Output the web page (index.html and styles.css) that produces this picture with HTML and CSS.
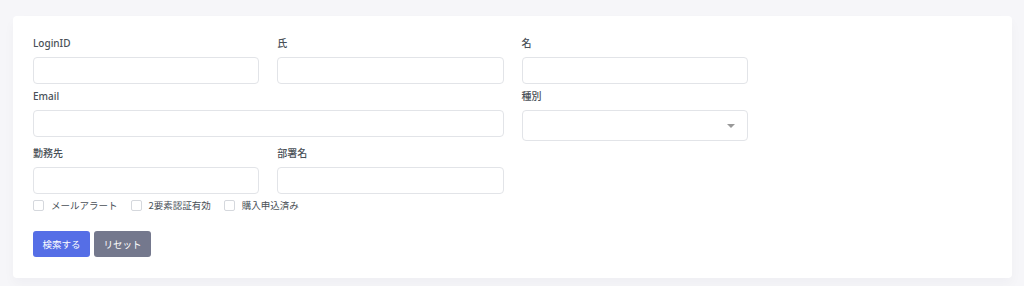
FILE: index.html
```html
<!DOCTYPE html>
<html lang="ja">
<head>
    <meta charset="UTF-8">
    <meta name="viewport" content="width=device-width, initial-scale=1.0">
    <title>ユーザー検索</title>
    <link rel="stylesheet" href="styles.css">
</head>
<body>
    <!-- Search card -->
    <div class="card">
        <div class="form-grid">
            <div class="field">
                <label class="field-label">LoginID</label>
                <input type="text" class="field-input">
            </div>
            <div class="field">
                <label class="field-label">氏</label>
                <input type="text" class="field-input">
            </div>
            <div class="field">
                <label class="field-label">名</label>
                <input type="text" class="field-input">
            </div>
            <div></div>

            <div class="field span-2">
                <label class="field-label">Email</label>
                <input type="text" class="field-input">
            </div>
            <div class="field">
                <label class="field-label">種別</label>
                <div class="select-box"><span class="caret"></span></div>
            </div>
            <div></div>

            <div class="field">
                <label class="field-label">勤務先</label>
                <input type="text" class="field-input">
            </div>
            <div class="field">
                <label class="field-label">部署名</label>
                <input type="text" class="field-input">
            </div>
        </div>

        <!-- Flags -->
        <div class="check-row">
            <label class="check"><span class="check-box"></span>メールアラート</label>
            <label class="check"><span class="check-box"></span>2要素認証有効</label>
            <label class="check"><span class="check-box"></span>購入申込済み</label>
        </div>

        <div class="actions">
            <button class="btn btn-primary">検索する</button>
            <button class="btn btn-secondary">リセット</button>
        </div>
    </div>
</body>
</html>
```

FILE: styles.css
```css
* { margin: 0; padding: 0; box-sizing: border-box; }
body { font-family: 'Noto Sans', 'Noto Sans CJK JP', sans-serif; background: #f6f6f9; color: #495057; padding: 16px 12px 8px 13px; }

.card { background: white; border-radius: 4px; padding: 20px 20px 21px; box-shadow: 0 6px 12px rgba(18,38,63,0.03); }

.form-grid { display: grid; grid-template-columns: repeat(4, 1fr); column-gap: 18px; row-gap: 5px; align-items: start; }
.span-2 { grid-column: span 2; }
.field { display: flex; flex-direction: column; }
.field-label { font-size: 10px; font-weight: 500; line-height: 15px; height: 16px; margin-bottom: 5px; color: #495057; }
.field-input { height: 27px; border: 1px solid #e2e4e8; border-radius: 4px; background: white; font-size: 11px; padding: 0 8px; }

.select-box { height: 31px; border: 1px solid #e2e4e8; border-radius: 4px; background: white; display: flex; align-items: center; justify-content: flex-end; padding-right: 12px; }
.caret { width: 0; height: 0; border-left: 4px solid transparent; border-right: 4px solid transparent; border-top: 4px solid #999; }

.check-row { display: flex; gap: 13px; margin-top: 3px; height: 16px; align-items: center; }
.check { display: flex; align-items: center; gap: 7px; font-size: 9.5px; color: #495057; font-family: 'Noto Sans CJK JP', sans-serif; }
.check-box { width: 11px; height: 11px; border: 1px solid #d5d8dd; border-radius: 2px; background: white; }

.actions { display: flex; gap: 4px; margin-top: 18px; }
.btn { height: 26px; padding: 0 9.5px; border: none; border-radius: 3px; color: white; font-size: 9.5px; font-family: 'Noto Sans CJK JP', sans-serif; white-space: nowrap; cursor: pointer; }
.btn-primary { background: #556ee6; }
.btn-secondary { background: #74788d; }
```
